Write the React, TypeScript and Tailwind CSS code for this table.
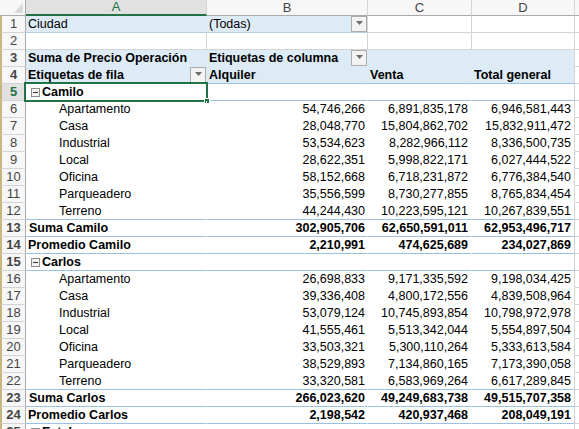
import React from "react";

// column widths include each cell's right gridline
const COLS = "grid grid-cols-[26px_181px_161px_104px_103px_1fr]";

type Kind = "group" | "item" | "sum" | "avg";

interface PivotRow {
  n: number;
  kind: Kind;
  label: string;
  b?: string;
  c?: string;
  d?: string;
  selected?: boolean;
}

const rows: PivotRow[] = [
  { n: 5, kind: "group", label: "Camilo", selected: true },
  { n: 6, kind: "item", label: "Apartamento", b: "54,746,266", c: "6,891,835,178", d: "6,946,581,443" },
  { n: 7, kind: "item", label: "Casa", b: "28,048,770", c: "15,804,862,702", d: "15,832,911,472" },
  { n: 8, kind: "item", label: "Industrial", b: "53,534,623", c: "8,282,966,112", d: "8,336,500,735" },
  { n: 9, kind: "item", label: "Local", b: "28,622,351", c: "5,998,822,171", d: "6,027,444,522" },
  { n: 10, kind: "item", label: "Oficina", b: "58,152,668", c: "6,718,231,872", d: "6,776,384,540" },
  { n: 11, kind: "item", label: "Parqueadero", b: "35,556,599", c: "8,730,277,855", d: "8,765,834,454" },
  { n: 12, kind: "item", label: "Terreno", b: "44,244,430", c: "10,223,595,121", d: "10,267,839,551" },
  { n: 13, kind: "sum", label: "Suma Camilo", b: "302,905,706", c: "62,650,591,011", d: "62,953,496,717" },
  { n: 14, kind: "avg", label: "Promedio Camilo", b: "2,210,991", c: "474,625,689", d: "234,027,869" },
  { n: 15, kind: "group", label: "Carlos" },
  { n: 16, kind: "item", label: "Apartamento", b: "26,698,833", c: "9,171,335,592", d: "9,198,034,425" },
  { n: 17, kind: "item", label: "Casa", b: "39,336,408", c: "4,800,172,556", d: "4,839,508,964" },
  { n: 18, kind: "item", label: "Industrial", b: "53,079,124", c: "10,745,893,854", d: "10,798,972,978" },
  { n: 19, kind: "item", label: "Local", b: "41,555,461", c: "5,513,342,044", d: "5,554,897,504" },
  { n: 20, kind: "item", label: "Oficina", b: "33,503,321", c: "5,300,110,264", d: "5,333,613,584" },
  { n: 21, kind: "item", label: "Parqueadero", b: "38,529,893", c: "7,134,860,165", d: "7,173,390,058" },
  { n: 22, kind: "item", label: "Terreno", b: "33,320,581", c: "6,583,969,264", d: "6,617,289,845" },
  { n: 23, kind: "sum", label: "Suma Carlos", b: "266,023,620", c: "49,249,683,738", d: "49,515,707,358" },
  { n: 24, kind: "avg", label: "Promedio Carlos", b: "2,198,542", c: "420,937,468", d: "208,049,191" },
  { n: 25, kind: "group", label: "Esteban" },
];

// rows whose bottom edge carries a blue pivot line
const lined = new Set([5, 12, 13, 14, 15, 22, 23, 24]);

function RowNum({ n, active }: { n: number; active?: boolean }) {
  return (
    <div
      className={
        active
          ? "flex items-center justify-center border-l-2 border-l-[#c9b67a] border-r border-r-[#ababab] border-b border-b-[#d4d4d4] bg-[#e1e1e1] text-[#217346] text-[13px] leading-[16px]"
          : "flex items-center justify-center border-l-2 border-l-[#c9b67a] border-r border-r-[#ababab] border-b border-b-[#d4d4d4] bg-[#f7f7f7] text-[#444] text-[13px] leading-[16px]"
      }
    >
      {n}
    </div>
  );
}

function DropBtn() {
  return (
    <div className="w-[16px] h-[16px] shrink-0 border border-[#acacac] bg-[#f3f3f3] flex items-center justify-center pb-[2px]">
      <svg width="7" height="4" viewBox="0 0 7 4">
        <path d="M0 0h7L3.5 4z" fill="#6d6d6d" />
      </svg>
    </div>
  );
}

function MinusBox() {
  return (
    <div className="w-[9px] h-[9px] shrink-0 border border-[#8c8c8c] bg-[#f4f4f4] flex items-center justify-center mr-[2px]">
      <div className="w-[5px] h-[1px] bg-[#333]" />
    </div>
  );
}

function ColHeader() {
  return (
    <div className={`${COLS} h-[16px] text-[13px]`}>
      <div className="flex items-end justify-end pr-[2px] pb-[2px] border-r border-b border-[#ababab] bg-[#f7f7f7]">
        <svg width="9" height="10" viewBox="0 0 9 10">
          <path d="M9 0V10H0z" fill="#dadada" />
        </svg>
      </div>
      <div className="border-r border-r-[#d4d4d4] border-b-2 border-b-[#217346] bg-[#e1e1e1] text-[#217346] text-center leading-[14px]">
        A
      </div>
      <div className="border-r border-r-[#d4d4d4] border-b border-b-[#ababab] bg-[#f7f7f7] text-[#444] text-center leading-[15px]">
        B
      </div>
      <div className="border-r border-r-[#d4d4d4] border-b border-b-[#ababab] bg-[#f7f7f7] text-[#444] text-center leading-[15px]">
        C
      </div>
      <div className="border-r border-r-[#d4d4d4] border-b border-b-[#ababab] bg-[#f7f7f7] text-[#444] text-center leading-[15px]">
        D
      </div>
      <div className="border-b border-b-[#ababab] bg-[#f7f7f7]" />
    </div>
  );
}

function TopRows() {
  return (
    <>
      {/* Filter: Ciudad */}
      <div className={`${COLS} h-[17px] leading-[16px]`}>
        <RowNum n={1} />
        <div className="flex items-center px-[2px] bg-[#ddebf7] border-r border-r-[#ddebf7] border-b border-b-[#b7cde6]">
          Ciudad
        </div>
        <div className="flex items-center justify-between pl-[2px] bg-[#ddebf7] border-r border-r-[#d4d4d4] border-b border-b-[#b7cde6]">
          <span>(Todas)</span>
          <DropBtn />
        </div>
        <div className="border-r border-b border-[#d4d4d4]" />
        <div className="border-r border-b border-[#d4d4d4]" />
        <div className="border-b border-[#d4d4d4]" />
      </div>

      <div className={`${COLS} h-[17px] leading-[16px]`}>
        <RowNum n={2} />
        <div className="border-r border-b border-[#d4d4d4]" />
        <div className="border-r border-b border-[#d4d4d4]" />
        <div className="border-r border-b border-[#d4d4d4]" />
        <div className="border-r border-b border-[#d4d4d4]" />
        <div className="border-b border-[#d4d4d4]" />
      </div>

      {/* Pivot header */}
      <div className={`${COLS} h-[17px] leading-[16px] font-bold`}>
        <RowNum n={3} />
        <div className="flex items-center px-[2px] bg-[#ddebf7] border-r border-b border-[#ddebf7] whitespace-nowrap">
          Suma de Precio Operación
        </div>
        <div className="flex items-center justify-between pl-[2px] bg-[#ddebf7] border-r border-b border-[#ddebf7] whitespace-nowrap">
          <span>Etiquetas de columna</span>
          <DropBtn />
        </div>
        <div className="bg-[#ddebf7] border-r border-b border-[#ddebf7]" />
        <div className="bg-[#ddebf7] border-r border-r-[#d4d4d4] border-b border-b-[#ddebf7]" />
        <div className="border-b border-[#d4d4d4]" />
      </div>

      <div className={`${COLS} h-[17px] leading-[16px] font-bold`}>
        <RowNum n={4} />
        <div className="flex items-center justify-between pl-[2px] bg-[#ddebf7] border-r border-r-[#ddebf7] border-b border-b-[#9bc2e6] whitespace-nowrap">
          <span>Etiquetas de fila</span>
          <DropBtn />
        </div>
        <div className="flex items-center px-[2px] bg-[#ddebf7] border-r border-r-[#ddebf7] border-b border-b-[#9bc2e6]">
          Alquiler
        </div>
        <div className="flex items-center px-[2px] bg-[#ddebf7] border-r border-r-[#ddebf7] border-b border-b-[#9bc2e6]">
          Venta
        </div>
        <div className="flex items-center px-[2px] bg-[#ddebf7] border-r border-r-[#d4d4d4] border-b border-b-[#9bc2e6] whitespace-nowrap">
          Total general
        </div>
        <div className="border-b border-[#d4d4d4]" />
      </div>
    </>
  );
}

function BodyRow({ row }: { row: PivotRow }) {
  const bold = row.kind !== "item";
  const line = lined.has(row.n) ? "border-b-[#9bc2e6]" : "border-b-white";

  let label: React.ReactNode = row.label;
  let labelPad = "pl-[2px]";
  if (row.kind === "group") {
    label = (
      <>
        <MinusBox />
        <span>{row.label}</span>
      </>
    );
    labelPad = "pl-[5px]";
  } else if (row.kind === "item") {
    labelPad = "pl-[33px]";
  } else if (row.kind === "sum") {
    labelPad = "pl-[3px]";
  }

  return (
    <div className={`${COLS} h-[17px] leading-[16px] ${bold ? "font-bold" : ""}`}>
      <RowNum n={row.n} active={row.selected} />
      <div className={`relative flex items-center whitespace-nowrap border-r border-r-white border-b ${line} ${labelPad}`}>
        {label}
        {row.selected && (
          <div className="absolute -left-[2px] -top-[2px] w-[184px] h-[20px] border-2 border-[#217346]">
            <div className="absolute -right-[4px] -bottom-[4px] w-[6px] h-[6px] bg-[#217346] border border-white" />
          </div>
        )}
      </div>
      <div className={`flex items-center justify-end pr-[2px] border-r border-r-white border-b ${line}`}>
        {row.b}
      </div>
      <div className={`flex items-center justify-end pr-[3px] border-r border-r-white border-b ${line}`}>
        {row.c}
      </div>
      <div className={`flex items-center justify-end pr-[3px] border-r border-r-[#d4d4d4] border-b ${line}`}>
        {row.d}
      </div>
      <div className="border-b border-[#d4d4d4]" />
    </div>
  );
}

export default function App() {
  return (
    <div className="w-[579px] h-[429px] overflow-hidden bg-white text-black text-[12.5px] font-['Liberation_Sans',Arial,sans-serif]">
      <ColHeader />
      <TopRows />
      {rows.map((r) => (
        <BodyRow key={r.n} row={r} />
      ))}
    </div>
  );
}
